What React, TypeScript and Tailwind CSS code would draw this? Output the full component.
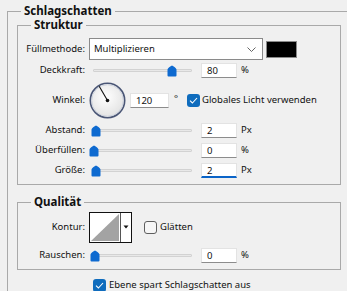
import type { ReactNode } from 'react';

function Group({ title, className, children }: { title: string; className: string; children: ReactNode }) {
  return (
    <div className={'relative border border-[#a9a9a9] ' + className}>
      <div className="absolute left-[13px] top-[-8px] bg-[#f0f0f0] px-[3px] text-[11.5px] font-bold leading-[14px]">{title}</div>
      {children}
    </div>
  );
}

function Label({ children }: { children: ReactNode }) {
  return <div className="w-[67px] shrink-0 text-right">{children}</div>;
}

function Thumb() {
  return (
    <svg width="10" height="12" viewBox="0 0 10 12">
      <path d="M5 0.5 C6.5 1.5 9.5 3 9.5 4.5 V10.5 Q9.5 11.5 8.5 11.5 H1.5 Q0.5 11.5 0.5 10.5 V4.5 C0.5 3 3.5 1.5 5 0.5 Z" fill="#0e6ad0" />
    </svg>
  );
}

function Slider({ at }: { at: number }) {
  return (
    <div className="relative ml-[4px] h-[16px] w-[112px] shrink-0">
      <div className="ml-[4px] mt-[7px] h-[3px] w-[99px] rounded-[1px] border border-[#d2d2d2] bg-[#e8e8e8]" />
      <div className="absolute top-[3px]" style={{ left: at }}>
        <Thumb />
      </div>
    </div>
  );
}

function NumField({ value, wide, focused }: { value: string; wide?: boolean; focused?: boolean }) {
  return (
    <div
      className={
        (wide ? 'w-[39px] ' : 'w-[36px] ') +
        'h-[15px] shrink-0 border border-[#e3e3e3] bg-white pl-[5px] leading-[13px] ' +
        (focused ? 'border-b-2 border-b-[#0a64c8]' : 'border-b-[#8c8c8c]')
      }
    >
      {value}
    </div>
  );
}

function Check({ checked }: { checked: boolean }) {
  if (!checked) {
    return <div className="h-[13px] w-[13px] shrink-0 rounded-[3px] border border-[#5e5e5e] bg-[#f6f6f6]" />;
  }
  return (
    <div className="flex h-[13px] w-[13px] shrink-0 items-center justify-center rounded-[3px] bg-[#0f6cbd]">
      <svg width="9" height="7" viewBox="0 0 9 7">
        <path d="M1 3.6 L3.4 6 L8 1" fill="none" stroke="white" strokeWidth="1.1" />
      </svg>
    </div>
  );
}

function Dial() {
  return (
    <svg width="37" height="37" viewBox="0 0 37 37" className="ml-[4px] shrink-0">
      <defs>
        <radialGradient id="dialbg" cx="45%" cy="40%" r="60%">
          <stop offset="0%" stopColor="#ffffff" />
          <stop offset="100%" stopColor="#e2e2e2" />
        </radialGradient>
      </defs>
      <circle cx="18.5" cy="18.5" r="17.2" fill="url(#dialbg)" stroke="#4a5676" strokeWidth="1.6" />
      <circle cx="18.5" cy="18.5" r="15.8" fill="none" stroke="#c9cfdc" strokeWidth="0.8" />
      <line x1="18.5" y1="18.5" x2="10.2" y2="4.2" stroke="#111" strokeWidth="1.1" />
      <circle cx="18.5" cy="18.5" r="1.8" fill="#111" />
    </svg>
  );
}

function Kontur() {
  return (
    <svg width="43" height="31" viewBox="0 0 43 31" className="ml-[4px] shrink-0">
      <rect x="0.5" y="0.5" width="42" height="30" fill="white" stroke="#111" />
      <path d="M2 29 L30 2 V29 Z" fill="#a3a3a3" />
      <line x1="31.5" y1="1" x2="31.5" y2="30" stroke="#555" />
      <path d="M34.5 13.5 H39.5 L37 16.5 Z" fill="#111" />
    </svg>
  );
}

export default function App() {
  return (
    <div className="h-[291px] w-[347px] overflow-hidden bg-[#f0f0f0] pt-[11px] font-['Noto_Sans','Open_Sans',sans-serif] text-[9.5px] text-[#111]">
      <Group title="Schlagschatten" className="ml-[7px] w-[380px] pb-[30px] pt-[13px]">
        <Group title="Struktur" className="ml-[9px] w-[324px] pb-[6px] pt-[12px]">
          <div className="flex h-[22px] items-center">
            <Label>Füllmethode:</Label>
            <div className="ml-[4px] flex h-[22px] w-[174px] items-center justify-between border border-[#8a8a8a] bg-white pl-[4px] pr-[6px]">
              <span>Multiplizieren</span>
              <svg width="9" height="5" viewBox="0 0 9 5">
                <path d="M0.5 0.5 L4.5 4.5 L8.5 0.5" fill="none" stroke="#555" strokeWidth="0.9" />
              </svg>
            </div>
            <div className="ml-[3px] h-[17px] w-[31px] border border-[#8a8a8a] bg-black" />
          </div>

          <div className="mt-[2px] flex h-[16px] items-center">
            <Label>Deckkraft:</Label>
            <Slider at={78} />
            <NumField value="80" />
            <span className="ml-[4px]">%</span>
          </div>

          <div className="mt-[4px] flex h-[37px] items-center">
            <Label>Winkel:</Label>
            <Dial />
            <div className="ml-[4px]">
              <NumField value="120" wide />
            </div>
            <span className="ml-[5px] w-[13px] self-start pt-[10px]">°</span>
            <Check checked />
            <span className="ml-[2px]">Globales Licht verwenden</span>
          </div>

          <div className="mt-[3px] flex h-[16px] items-center">
            <Label>Abstand:</Label>
            <Slider at={2} />
            <NumField value="2" />
            <span className="ml-[4px]">Px</span>
          </div>

          <div className="mt-[4px] flex h-[16px] items-center">
            <Label>Überfüllen:</Label>
            <Slider at={0} />
            <NumField value="0" />
            <span className="ml-[4px]">%</span>
          </div>

          <div className="mt-[4px] flex h-[16px] items-center">
            <Label>Größe:</Label>
            <Slider at={2} />
            <NumField value="2" focused />
            <span className="ml-[4px]">Px</span>
          </div>
        </Group>

        <Group title="Qualität" className="ml-[9px] mt-[17px] w-[324px] pb-[6px] pt-[9px]">
          <div className="flex h-[31px] items-center">
            <Label>Kontur:</Label>
            <Kontur />
            <div className="ml-[12px]">
              <Check checked={false} />
            </div>
            <span className="ml-[3px]">Glätten</span>
          </div>

          <div className="mt-[4px] flex h-[16px] items-center">
            <Label>Rauschen:</Label>
            <Slider at={1} />
            <NumField value="0" />
            <span className="ml-[4px]">%</span>
          </div>
        </Group>

        <div className="ml-[85px] mt-[8px] flex items-center">
          <Check checked />
          <span className="ml-[3px]">Ebene spart Schlagschatten aus</span>
        </div>
      </Group>
    </div>
  );
}
